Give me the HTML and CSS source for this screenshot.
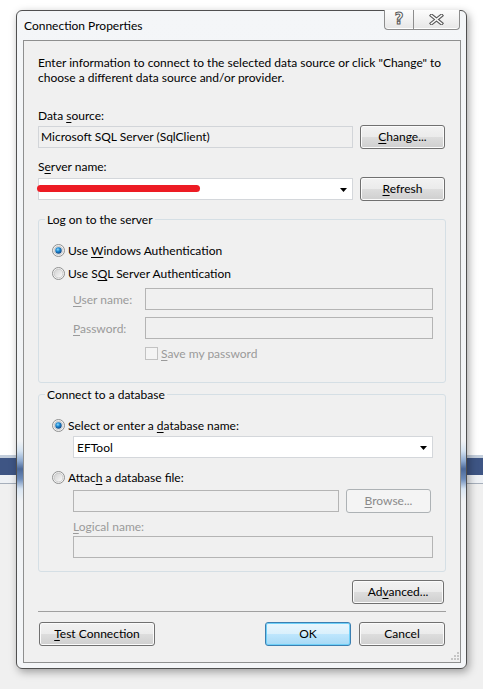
FILE: index.html
```html
<!DOCTYPE html>
<html>
<head>
<meta charset="utf-8">
<title>Connection Properties</title>
<link rel="stylesheet" href="styles.css">
</head>
<body>
<svg class="defs" width="0" height="0" aria-hidden="true">
  <defs>
    <linearGradient id="rfill" x1="0" y1="0" x2="1" y2="1">
      <stop offset="0" stop-color="#cfcfcf"/>
      <stop offset="1" stop-color="#fdfdfd"/>
    </linearGradient>
    <radialGradient id="rdot" cx="0.4" cy="0.35" r="0.7">
      <stop offset="0" stop-color="#8fdcff"/>
      <stop offset="0.45" stop-color="#1a86d0"/>
      <stop offset="1" stop-color="#123e78"/>
    </radialGradient>
  </defs>
</svg>
<div class="window">
  <div class="titlebar">
    <span class="title">Connection Properties</span>
    <div class="caption-btns">
      <div class="cap-btn help"><span class="help-glyph">?</span></div>
      <div class="cap-btn close">
        <svg width="15" height="11" viewBox="0 0 15 11">
          <path d="M2.5 1.5 L12.5 9.5 M12.5 1.5 L2.5 9.5" stroke="#5a5a5a" stroke-width="3.6" stroke-linecap="square"/>
          <path d="M2.5 1.5 L12.5 9.5 M12.5 1.5 L2.5 9.5" stroke="#fdfdfd" stroke-width="1.6" stroke-linecap="square"/>
        </svg>
      </div>
    </div>
  </div>
  <div class="client">
    <div class="intro">
      <div class="intro-line">Enter information to connect to the selected data source or click "Change" to</div>
      <div class="intro-line">choose a different data source and/or provider.</div>
    </div>

    <div class="label lbl-ds">Data <u>s</u>ource:</div>
    <div class="row row-ds">
      <div class="textbox readonly">Microsoft SQL Server (SqlClient)</div>
      <button class="btn btn-side"><u>C</u>hange...</button>
    </div>

    <div class="label lbl-srv">S<u>e</u>rver name:</div>
    <div class="row row-srv">
      <div class="combo">
        <span class="redact"></span>
        <svg class="arrow" width="7" height="4" viewBox="0 0 7 4"><polygon points="0,0 7,0 3.5,4" fill="#000"/></svg>
      </div>
      <button class="btn btn-side"><u>R</u>efresh</button>
    </div>

    <fieldset class="group group-logon">
      <legend>Log on to the server</legend>
      <div class="radio-row">
        <svg class="radio" width="13" height="13" viewBox="0 0 13 13">
          <circle cx="6.5" cy="6.5" r="6" fill="#f6f6f6" stroke="#8e8f8f"/>
          <circle cx="6.5" cy="6.5" r="4.4" fill="url(#rfill)" stroke="#c4c4c4" stroke-width="0.8"/>
          <circle cx="6.5" cy="6.5" r="3.2" fill="url(#rdot)"/>
        </svg>
        <span>Use <u>W</u>indows Authentication</span>
      </div>
      <div class="radio-row rr2">
        <svg class="radio" width="13" height="13" viewBox="0 0 13 13">
          <circle cx="6.5" cy="6.5" r="6" fill="#f6f6f6" stroke="#8e8f8f"/>
          <circle cx="6.5" cy="6.5" r="4.4" fill="url(#rfill)" stroke="#c4c4c4" stroke-width="0.8"/>
        </svg>
        <span>Use S<u>Q</u>L Server Authentication</span>
      </div>
      <div class="field-row fr-user">
        <span class="field-label disabled"><u>U</u>ser name:</span>
        <div class="textbox disabled-box"></div>
      </div>
      <div class="field-row fr-pass">
        <span class="field-label disabled"><u>P</u>assword:</span>
        <div class="textbox disabled-box"></div>
      </div>
      <div class="check-row">
        <span class="checkbox"></span>
        <span class="disabled"><u>S</u>ave my password</span>
      </div>
    </fieldset>

    <fieldset class="group group-db">
      <legend>Connect to a database</legend>
      <div class="radio-row">
        <svg class="radio" width="13" height="13" viewBox="0 0 13 13">
          <circle cx="6.5" cy="6.5" r="6" fill="#f6f6f6" stroke="#8e8f8f"/>
          <circle cx="6.5" cy="6.5" r="4.4" fill="url(#rfill)" stroke="#c4c4c4" stroke-width="0.8"/>
          <circle cx="6.5" cy="6.5" r="3.2" fill="url(#rdot)"/>
        </svg>
        <span>Select or enter a <u>d</u>atabase name:</span>
      </div>
      <div class="combo combo-db">
        <span class="combo-text">EFTool</span>
        <svg class="arrow" width="7" height="4" viewBox="0 0 7 4"><polygon points="0,0 7,0 3.5,4" fill="#000"/></svg>
      </div>
      <div class="radio-row rr-attach">
        <svg class="radio" width="13" height="13" viewBox="0 0 13 13">
          <circle cx="6.5" cy="6.5" r="6" fill="#f6f6f6" stroke="#8e8f8f"/>
          <circle cx="6.5" cy="6.5" r="4.4" fill="url(#rfill)" stroke="#c4c4c4" stroke-width="0.8"/>
        </svg>
        <span>Attac<u>h</u> a database file:</span>
      </div>
      <div class="file-row">
        <div class="textbox disabled-box"></div>
        <button class="btn btn-disabled"><u>B</u>rowse...</button>
      </div>
      <div class="disabled logical-label"><u>L</u>ogical name:</div>
      <div class="textbox disabled-box logical-box"></div>
    </fieldset>

    <div class="adv-row">
      <button class="btn btn-adv">Ad<u>v</u>anced...</button>
    </div>
    <div class="separator"></div>
    <div class="bottom-row">
      <button class="btn btn-test"><u>T</u>est Connection</button>
      <div class="spacer"></div>
      <button class="btn btn-ok">OK</button>
      <button class="btn btn-cancel">Cancel</button>
    </div>
    <svg class="grip" width="8" height="8" viewBox="0 0 8 8">
      <rect x="6" y="0" width="2" height="2" fill="#c5c5c5"/>
      <rect x="3" y="3" width="2" height="2" fill="#c5c5c5"/>
      <rect x="6" y="3" width="2" height="2" fill="#c5c5c5"/>
      <rect x="0" y="6" width="2" height="2" fill="#c5c5c5"/>
      <rect x="3" y="6" width="2" height="2" fill="#c5c5c5"/>
      <rect x="6" y="6" width="2" height="2" fill="#c5c5c5"/>
    </svg>
  </div>
</div>
</body>
</html>
```

FILE: styles.css
```css
* { box-sizing: border-box; }
html, body { margin: 0; }
body {
  width: 483px;
  height: 689px;
  overflow: hidden;
  padding: 10px 0 0 16px;
  font-family: Lato, "Noto Sans", "DejaVu Sans", sans-serif;
  font-size: 12px;
  color: #000;
  background: linear-gradient(to bottom,
    #ffffff 0, #ffffff 455px,
    #c3cedc 455px, #c3cedc 458px,
    #3e5584 458px, #3e5584 475px,
    #eef1f5 475px, #eef1f5 483px,
    #a6afbb 483px, #a6afbb 484px,
    #f0f0f0 484px, #f0f0f0 100%);
}
.defs { position: absolute; }
u { text-decoration: underline; text-underline-offset: 2px; }

.window {
  width: 451px;
  height: 659px;
  border: 1px solid #505050;
  border-radius: 6px;
  padding: 0 5px 5px 6px;
  display: flex;
  flex-direction: column;
  background: linear-gradient(to bottom,
    #f4f6f8 0, #f1f3f5 430px,
    #d5e3f1 440px, #8eaad0 450px, #4b6898 458px, #6d8cba 468px,
    #d9e6f3 478px, #f1f3f5 490px, #f4f6f8 100%);
  box-shadow: 2px 3px 8px rgba(0, 0, 0, 0.35);
}

.titlebar {
  height: 29px;
  display: flex;
  justify-content: space-between;
  align-items: flex-start;
}
.title {
  padding-left: 1px;
  line-height: 29px;
}
.caption-btns {
  display: flex;
  margin-top: -1px;
  margin-right: 1px;
}
.cap-btn {
  height: 20px;
  border: 1px solid #8d8d8d;
  border-top: none;
  background: linear-gradient(to bottom, #fdfdfd 0, #f2f2f2 50%, #e6e6e6 100%);
  display: flex;
  align-items: center;
  justify-content: center;
  box-shadow: inset 0 -1px 0 #ffffff;
}
.cap-btn.help {
  width: 29px;
  border-right: none;
  border-bottom-left-radius: 4px;
}
.cap-btn.close {
  width: 47px;
  border-bottom-right-radius: 4px;
}
.help-glyph {
  font-family: "DejaVu Sans", sans-serif;
  font-weight: bold;
  font-size: 15px;
  line-height: 15px;
  color: #fdfdfd;
  -webkit-text-stroke: 1px #5a5a5a;
}

.client {
  flex: 1;
  position: relative;
  border: 1px solid #8e8f8f;
  background: #f0f0f0;
  padding: 14px 14px 15px 14px;
  display: flex;
  flex-direction: column;
}
.intro { margin: 0; }
.intro-line {
  height: 15px;
  line-height: 15px;
  white-space: nowrap;
}
.label { line-height: 15px; }
.lbl-ds { margin-top: 23px; }
.lbl-srv { margin-top: 10px; }
.row {
  display: flex;
  align-items: center;
  gap: 7px;
  height: 24px;
  padding-right: 1px;
}
.row-ds { margin-top: 2px; }
.row-srv { margin-top: 3px; }

.textbox {
  height: 22px;
  border: 1px solid #d4d7db;
  background: #ffffff;
  line-height: 20px;
  padding-left: 2px;
}
.row .textbox { flex: 1; }
.textbox.readonly {
  background: #f0f0f0;
  border-color: #d2d5d9;
}
.textbox.disabled-box {
  background: #f0f0f0;
  border-color: #b4b4b4;
}

.combo {
  flex: 1;
  height: 22px;
  border: 1px solid #d4d7db;
  background: #ffffff;
  display: flex;
  align-items: center;
  justify-content: space-between;
  padding: 0 5px 0 0;
}
.redact {
  display: block;
  width: 163px;
  height: 7px;
  margin-left: -2px;
  margin-top: -1px;
  border-radius: 4px;
  background: #ed1c24;
}
.arrow { display: block; margin-top: 1px; }

.btn {
  font: inherit;
  color: #000;
  height: 24px;
  padding: 0;
  border: 1px solid #707070;
  border-radius: 3px;
  background: linear-gradient(to bottom, #f2f2f2 0, #ebebeb 50%, #dddddd 51%, #cfcfcf 100%);
  box-shadow: inset 0 0 0 1px #fbfbfb;
  line-height: 20px;
}
.btn-side { width: 85px; }

.group {
  margin: 0;
  border: 1px solid #d5dfe5;
  border-radius: 3px;
  padding: 14px 12px 20px 13px;
  min-width: 0;
}
.group legend {
  padding: 0 2px;
  margin-left: -7px;
  line-height: 15px;
}
.group-logon { margin-top: 11px; }
.group-db { margin-top: 4px; padding-bottom: 13px; }

.radio-row {
  height: 18px;
  display: flex;
  align-items: center;
}
.radio { display: block; flex: none; margin-right: 3px; }
.rr2 { margin-top: 5px; }
.rr-attach { margin-top: 10px; }

.field-row {
  display: flex;
  align-items: center;
  margin-left: 21px;
  height: 22px;
}
.field-row .textbox { flex: 1; }
.field-label { width: 72px; flex: none; }
.fr-user { margin-top: 6px; }
.fr-pass { margin-top: 7px; }
.disabled { color: #9a9a9a; }

.check-row {
  margin-top: 5px;
  margin-left: 93px;
  height: 18px;
  display: flex;
  align-items: center;
}
.checkbox {
  width: 13px;
  height: 13px;
  border: 1px solid #c2c2c2;
  background: #f4f4f4;
  margin-right: 3px;
}

.combo-db {
  flex: none;
  margin-top: 2px;
  margin-left: 21px;
  padding-left: 3px;
}
.file-row {
  margin-top: 3px;
  margin-left: 21px;
  margin-right: 2px;
  height: 24px;
  display: flex;
  align-items: center;
  gap: 7px;
}
.file-row .textbox { flex: 1; }
.btn-disabled {
  width: 85px;
  color: #8a8a8a;
  border-color: #adb2b5;
  background: #f4f4f4;
  box-shadow: none;
}
.logical-label { margin-top: 6px; margin-left: 21px; line-height: 15px; }
.logical-box { margin-top: 2px; margin-left: 21px; }

.adv-row {
  margin-top: 8px;
  display: flex;
  justify-content: flex-end;
  padding-right: 2px;
}
.btn-adv { width: 92px; }
.separator {
  margin-top: 7px;
  height: 1px;
  background: #a0a0a0;
}
.bottom-row {
  margin-top: 10px;
  display: flex;
  align-items: center;
  padding: 0 1px;
}
.spacer { flex: 1; }
.btn-test { width: 116px; }
.btn-ok {
  width: 86px;
  border-color: #3c7fb1;
  background: linear-gradient(to bottom, #eaf6fd 0, #d9f0fc 50%, #bee6fd 51%, #a7d9f5 100%);
  box-shadow: inset 0 0 0 1px #6fd0f8;
}
.btn-cancel { width: 86px; margin-left: 8px; }

.grip {
  position: absolute;
  right: 1px;
  bottom: 2px;
}
```
